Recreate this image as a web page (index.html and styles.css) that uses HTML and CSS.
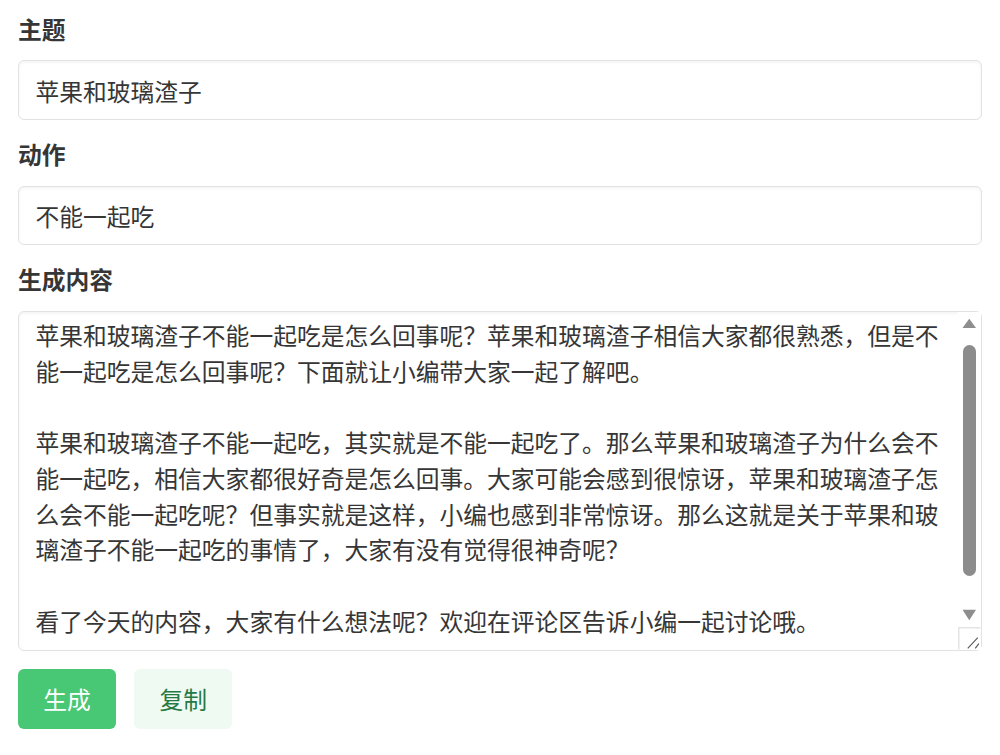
FILE: index.html
```html
<!DOCTYPE html>
<html lang="zh-CN">
<head>
    <meta charset="UTF-8">
    <meta name="viewport" content="width=device-width, initial-scale=1.0">
    <title>生成内容</title>
    <link rel="stylesheet" href="styles.css">
</head>
<body>
    <div class="container">
        <div class="field">
            <label class="label" for="subject">主题</label>
            <input class="input" type="text" id="subject" value="苹果和玻璃渣子">
        </div>
        <div class="field">
            <label class="label" for="action">动作</label>
            <input class="input" type="text" id="action" value="不能一起吃">
        </div>
        <div class="field">
            <label class="label" for="result">生成内容</label>
            <div class="textarea-wrap">
                <textarea class="textarea" id="result">苹果和玻璃渣子不能一起吃是怎么回事呢？苹果和玻璃渣子相信大家都很熟悉，但是不能一起吃是怎么回事呢？下面就让小编带大家一起了解吧。

苹果和玻璃渣子不能一起吃，其实就是不能一起吃了。那么苹果和玻璃渣子为什么会不能一起吃，相信大家都很好奇是怎么回事。大家可能会感到很惊讶，苹果和玻璃渣子怎么会不能一起吃呢？但事实就是这样，小编也感到非常惊讶。那么这就是关于苹果和玻璃渣子不能一起吃的事情了，大家有没有觉得很神奇呢？

看了今天的内容，大家有什么想法呢？欢迎在评论区告诉小编一起讨论哦。

</textarea>
                <div class="scrollbar">
                    <svg class="sb-button" viewBox="0 0 15 15"><polygon points="3,10.7 7.5,4.5 12,10.7"/></svg>
                    <div class="sb-track"><div class="sb-thumb"></div></div>
                    <svg class="sb-button" viewBox="0 0 15 15"><polygon points="3,3.2 12,3.2 7.5,10.2"/></svg>
                    <svg class="sb-corner" viewBox="0 0 15 15">
                        <path class="edge" d="M0.5 15V0.5H15"/>
                        <path class="grip" d="M13.2 7.1L6.5 14.2M13.9 11.1L11.5 14.2"/>
                    </svg>
                </div>
            </div>
        </div>
        <div class="buttons">
            <button class="button is-success">生成</button>
            <button class="button is-light">复制</button>
        </div>
    </div>
    <script src="script.js"></script>
</body>
</html>
```

FILE: styles.css
```css
html {
    zoom: 1.5;
}
body {
    margin: 0;
    font-family: "Noto Sans", "Noto Sans CJK SC", sans-serif;
    font-size: 15.85px;
    line-height: 1.5;
    color: #363636;
    background: #fff;
}
.container {
    padding: 8.5px 12px;
}
.field {
    margin-bottom: 12px;
}
.label {
    display: block;
    font-weight: 700;
    color: #363636;
    margin-bottom: 8px;
}
.input, .textarea {
    display: block;
    width: 100%;
    box-sizing: border-box;
    font-family: inherit;
    font-size: 15.85px;
    color: #363636;
    background: #fff;
    border: 1px solid #e2e2e2;
    border-radius: 4px;
    box-shadow: inset 0 1px 2px rgba(10, 10, 10, 0.05);
    outline: none;
}
.input {
    height: 2.5em;
    padding: 0 11px;
    line-height: 1.5;
}
.textarea-wrap {
    position: relative;
}
.textarea {
    height: 227px;
    padding: 11px 26px 11px 11px;
    line-height: 1.5;
    resize: none;
    overflow: hidden;
}

/* drawn scrollbar: the screenshot browser hides native ones */
.scrollbar {
    position: absolute;
    top: 1px;
    right: 1px;
    bottom: 1px;
    width: 15px;
    display: flex;
    flex-direction: column;
    background: #fff;
}
.sb-button {
    width: 15px;
    height: 15px;
    flex: none;
    fill: #8e8e8e;
}
.sb-track {
    flex: 1;
    padding-top: 7px;
}
.sb-thumb {
    width: 9px;
    height: 154px;
    margin: 0 3px;
    border-radius: 4.5px;
    background: #8c8c8c;
}
.sb-corner {
    width: 15px;
    height: 15px;
    flex: none;
}
.sb-corner .edge {
    fill: none;
    stroke: #e4e4e4;
}
.sb-corner .grip {
    fill: none;
    stroke: #5c5c5c;
    stroke-width: 0.8;
}
.buttons {
    display: flex;
    gap: 12px;
}
.button {
    height: 2.5em;
    padding: 0 16.2px;
    font-family: inherit;
    font-size: 15.85px;
    border: 1px solid transparent;
    border-radius: 4px;
    cursor: pointer;
}
.button.is-success {
    background-color: #48c774;
    color: #fff;
}
.button.is-light {
    background-color: #effaf3;
    color: #257942;
}
```

FILE: script.js
```js
document.getElementById('result').scrollTop = 6;
```
